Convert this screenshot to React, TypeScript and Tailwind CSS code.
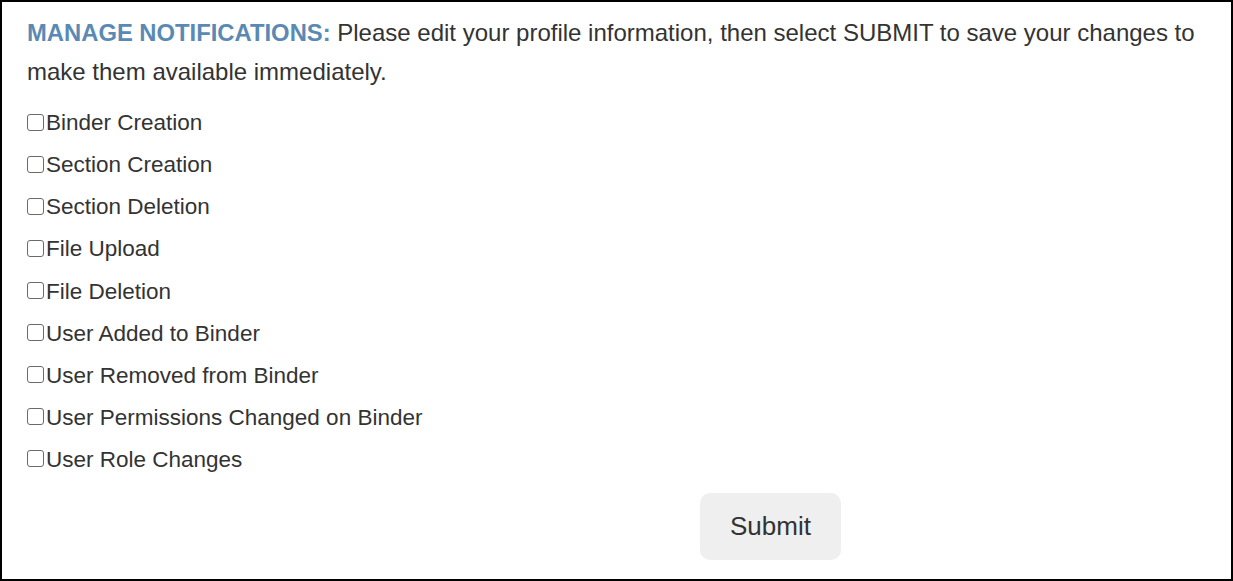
import { useState } from "react";

const options = [
  "Binder Creation",
  "Section Creation",
  "Section Deletion",
  "File Upload",
  "File Deletion",
  "User Added to Binder",
  "User Removed from Binder",
  "User Permissions Changed on Binder",
  "User Role Changes",
];

export default function App() {
  const [checked, setChecked] = useState<Record<string, boolean>>({});

  function toggle(name: string) {
    setChecked((prev) => ({ ...prev, [name]: !prev[name] }));
  }

  return (
    <div className="w-[1233px] h-[581px] border-2 border-black bg-white text-[#333] font-['Liberation_Sans',Arial,sans-serif]">
      <div className="pl-[25px] pr-[25px] pt-[11px]">
        <p className="text-[24px] leading-[39px]">
          <span className="font-bold text-[#5a8ab4] text-[23.8px]">MANAGE NOTIFICATIONS:</span>{" "}
          Please edit your profile information, then select SUBMIT to save your changes to make them
          available immediately.
        </p>

        <div className="mt-[11px] flex flex-col">
          {options.map((name) => (
            <label key={name} className="flex items-center h-[42.1px] text-[22.5px] cursor-pointer">
              <input
                type="checkbox"
                checked={!!checked[name]}
                onChange={() => toggle(name)}
                className="appearance-none m-0 mr-[2px] w-[17px] h-[17px] -mt-[2px] rounded-[3px] border border-[#6b6b6b] bg-white checked:bg-[#0075ff] checked:border-[#0075ff]"
              />
              {name}
            </label>
          ))}
        </div>

        <button className="mt-[12px] ml-[673px] w-[141px] h-[67px] rounded-[10px] bg-[#efefef] text-[26px] text-[#333]">
          Submit
        </button>
      </div>
    </div>
  );
}
